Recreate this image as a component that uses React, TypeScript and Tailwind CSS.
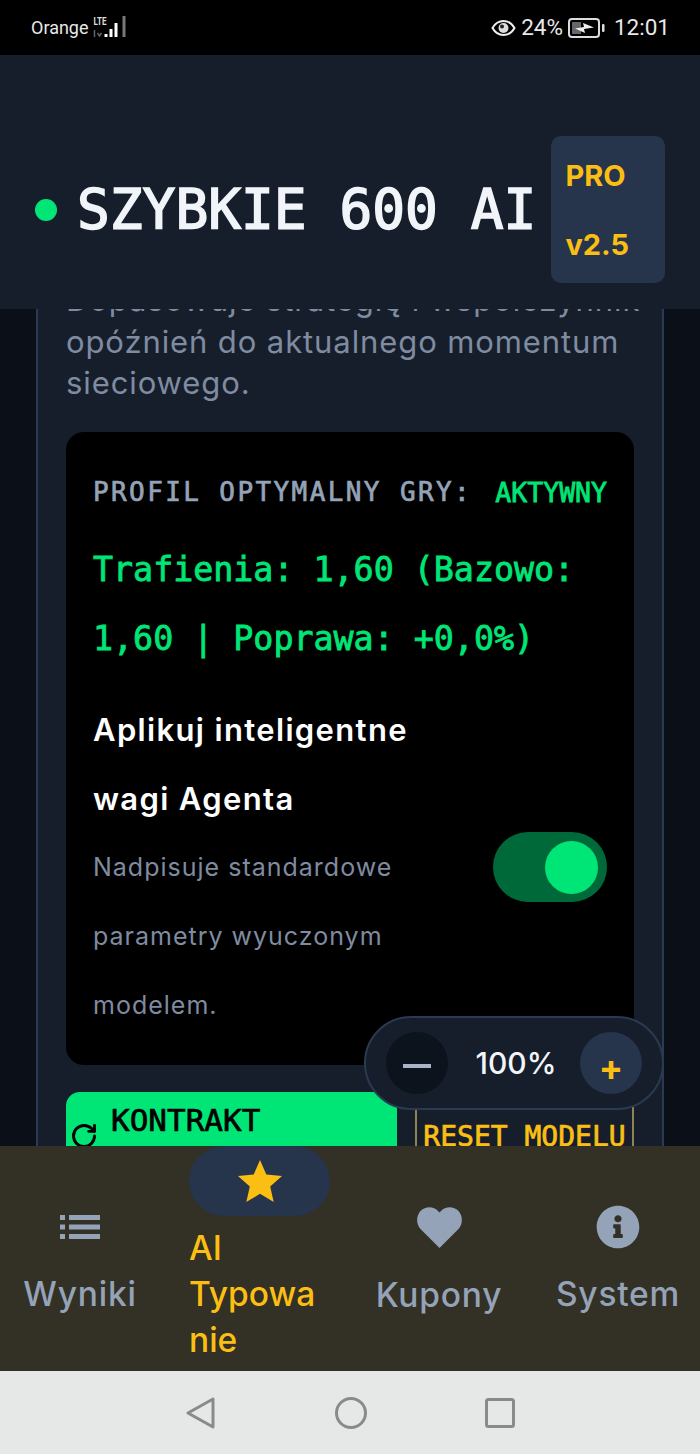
import { FaInfoCircle } from "react-icons/fa"
import { RotateCw } from "lucide-react"

const mono = "font-['DejaVu_Sans_Mono',monospace]"

function StatusBar() {
  return (
    <div className="flex h-[55px] shrink-0 items-center justify-between bg-black pl-[31px] pr-[30px] font-['Roboto',sans-serif] text-[#e8e8e8]">
      <div className="flex items-center gap-[2px]">
        <span className="text-[18px] leading-none">Orange</span>
        <svg width="38" height="24" viewBox="0 0 35 24" className="mb-[1px]">
          <text x="1" y="10" fontSize="11" fontWeight="700" fill="#ddd" fontFamily="Roboto" textLength="13" lengthAdjust="spacingAndGlyphs">LTE</text>
          <path d="M2 15V22M5 18L7 21L9 18" fill="none" stroke="#666" strokeWidth="1.500" />
          <rect x="12" y="19" width="3" height="3" fill="#fff" />
          <rect x="17" y="14" width="3" height="8" fill="#fff" />
          <rect x="22" y="8" width="3" height="14" fill="#fff" />
          <rect x="30" y="1" width="3" height="21" fill="#777" />
        </svg>
      </div>
      <div className="flex items-center">
        <svg width="25" height="18" viewBox="0 0 25 18" className="mr-[5px]">
          <path d="M1.500 9C4 4.500 8 2 12.500 2S21 4.500 23.500 9C21 13.500 17 16 12.500 16S4 13.500 1.500 9Z" fill="none" stroke="#eee" strokeWidth="2" />
          <circle cx="12.500" cy="9" r="5" fill="#ddd" />
          <circle cx="11" cy="7.500" r="2" fill="#222" />
        </svg>
        <span className="text-[22.500px] leading-none">24%</span>
        <svg width="38" height="20" viewBox="0 0 38 20" className="ml-[5px] mr-[8px]">
          <rect x="1" y="1" width="30" height="18" rx="3" fill="none" stroke="#ddd" strokeWidth="2" />
          <rect x="4" y="4" width="9" height="12" fill="#666" />
          <path d="M7 10.500L16 9L15 5L26 9.500L16 11L17 15Z" fill="#eee" />
          <rect x="34" y="6" width="2.500" height="8" rx="1" fill="#ddd" />
        </svg>
        <span className="text-[22.500px] leading-none">12:01</span>
      </div>
    </div>
  )
}

function Header() {
  return (
    <div className="flex h-[254px] shrink-0 items-center bg-[#161e2b] px-[35px] pt-[55px] text-[#f1f5f9]">
      <span className="h-[22px] w-[22px] shrink-0 rounded-full bg-[#00e676]" />
      <h1 className={`ml-[20px] whitespace-nowrap text-[54.500px] font-normal leading-[69px] [-webkit-text-stroke:1.600px_#f1f5f9] ${mono}`}>
        SZYBKIE 600 AI
      </h1>
      <div className="ml-[15px] flex h-[147px] w-[114px] shrink-0 flex-col justify-center rounded-[10px] bg-[#26344c] pl-[14px] font-['Inter',sans-serif] text-[29px] font-bold leading-[69px] text-[#fbbf14]">
        <span>PRO</span>
        <span>v2.5</span>
      </div>
    </div>
  )
}

function ControlPanel() {
  return (
    <div className="mt-[28px] rounded-[18px] bg-black px-[27px] pb-[26px] pt-[26px] font-['Inter',sans-serif] leading-[69px]">
      <div className={`flex items-center justify-between ${mono}`}>
        <span className="text-[26px] tracking-[2.400px] text-[#94a3b8] [-webkit-text-stroke:0.700px_#94a3b8]">PROFIL OPTYMALNY GRY:</span>
        <span className="text-[26.500px] text-[#00e676] [-webkit-text-stroke:0.800px_#00e676]">AKTYWNY</span>
      </div>
      <p className={`mt-[8px] text-[33.300px] text-[#00e676] [-webkit-text-stroke:0.800px_#00e676] ${mono}`}>
        Trafienia: 1,60 (Bazowo:
        <br />
        1,60 | Poprawa: +0,0%)
      </p>
      <div className="mt-[22px] flex items-center justify-between">
        <div className="mb-[-1px] w-[340px]">
          <div className="text-[31px] font-semibold tracking-[1.350px] text-white">Aplikuj inteligentne wagi Agenta</div>
          <div className="text-[25px] tracking-[1px] text-[#7f8ba0]">Nadpisuje standardowe parametry wyuczonym modelem.</div>
        </div>
        <div className="mt-[1px] flex h-[70px] w-[114px] items-center justify-end rounded-full bg-[#00693a] pr-[9px]">
          <span className="h-[53px] w-[53px] rounded-full bg-[#00e676]" />
        </div>
      </div>
    </div>
  )
}

function Actions() {
  return (
    <div className={`mt-[27px] flex gap-[18px] ${mono}`}>
      <div className="flex h-[86px] w-[331px] items-center gap-[13px] rounded-t-[14px] bg-[#00e676] pl-[4px] text-black">
        <RotateCw size={28} strokeWidth={2.500} className="mt-[2px]" />
        <span className="mb-[30px] text-[31px] leading-[36px] [-webkit-text-stroke:0.700px_#000]">KONTRAKT</span>
      </div>
      <div className="h-[86px] w-[219px] rounded-t-[14px] border-2 border-[#8f8350] pt-[8px] text-center text-[28px] leading-[69px] text-[#fbbf14] [-webkit-text-stroke:0.700px_#fbbf14]">
        RESET MODELU
      </div>
    </div>
  )
}

function ZoomPill() {
  return (
    <div className="absolute left-[364px] top-[707px] flex h-[94px] w-[300px] items-center justify-between rounded-full border-2 border-[#2a3a52] bg-[#161e2b] px-[20px] font-['Inter',sans-serif]">
      <button className="flex h-[62px] w-[62px] items-center justify-center rounded-full bg-[#0d131c]">
        <span className="mt-[6px] h-[4px] w-[28px] bg-[#a9b5c6]" />
      </button>
      <span className="ml-[4px] text-[30px] font-medium text-[#f1f5f9]">100%</span>
      <button className="flex h-[62px] w-[62px] items-center justify-center rounded-full bg-[#26344c] text-[36px] font-bold leading-none text-[#fbbf14]">
        <span className="mt-[8px]">+</span>
      </button>
    </div>
  )
}

function BottomNav() {
  const label = "text-[33.500px] font-medium tracking-[0.800px] leading-[46px]"
  return (
    <nav className="flex h-[225px] shrink-0 items-center bg-[#333026] pl-[24px] font-['Inter',sans-serif] text-[#94a3b8]">
      <div className="flex w-[112px] flex-col items-center gap-[32px] whitespace-nowrap pt-[15px]">
        <svg width="42" height="24" viewBox="0 0 42 24" fill="currentColor">
          <rect x="1" y="0" width="5" height="5" />
          <rect x="1" y="9.500" width="5" height="5" />
          <rect x="1" y="19" width="5" height="5" />
          <rect x="10" y="0" width="31" height="5" />
          <rect x="10" y="9.500" width="31" height="5" />
          <rect x="10" y="19" width="31" height="5" />
        </svg>
        <span className={label}>Wyniki</span>
      </div>
      <div className="ml-[53px] flex w-[141px] flex-col pb-[8px] text-[#fbbf14]">
        <div className="flex h-[70px] items-center justify-center rounded-[35px] bg-[#26344c]">
          <svg width="44" height="42" viewBox="0 0 44 42" fill="currentColor">
            <path d="M22 0L28.300 14.500L44 16L32.200 26.500L35.700 42L22 33.800L8.300 42L11.800 26.500L0 16L15.700 14.500Z" />
          </svg>
        </div>
        <span className="mt-[9px] text-[33.500px] font-medium leading-[46px]">AI Typowa nie</span>
      </div>
      <div className="ml-[46px] flex w-[126px] flex-col items-center gap-[24px] whitespace-nowrap pt-[7px]">
        <svg width="45" height="41" viewBox="0 0 45 41" fill="currentColor">
          <path d="M22.500 41L3.500 22C-1 17 -1 9 3.500 4C8.500 -1 16.500 -1 21 4L22.500 5.500L24 4C28.500 -1 36.500 -1 41.500 4C46 9 46 17 41.500 22Z" />
        </svg>
        <span className={label}>Kupony</span>
      </div>
      <div className="ml-[56px] flex w-[120px] flex-col items-center gap-[22px] whitespace-nowrap pt-[5px]">
        <FaInfoCircle size={44} />
        <span className={label}>System</span>
      </div>
    </nav>
  )
}

function SystemNav() {
  return (
    <div className="flex h-[83px] shrink-0 items-center justify-center gap-[118px] bg-[#e6e8e7]">
      <svg width="32" height="34" viewBox="0 0 32 34">
        <path d="M28 3V31L3 17Z" fill="none" stroke="#8a8a8a" strokeWidth="3" strokeLinejoin="round" />
      </svg>
      <svg width="32" height="32" viewBox="0 0 32 32">
        <circle cx="16" cy="16" r="14.500" fill="none" stroke="#8a8a8a" strokeWidth="3" />
      </svg>
      <svg width="30" height="30" viewBox="0 0 30 30">
        <rect x="1.500" y="1.500" width="27" height="27" rx="2" fill="none" stroke="#8a8a8a" strokeWidth="3" />
      </svg>
    </div>
  )
}

export default function App() {
  return (
    <div className="flex h-[1454px] w-[700px] flex-col overflow-hidden bg-[#0b0f17]">
      <StatusBar />
      <Header />
      <main className="relative min-h-0 flex-1 overflow-hidden">
        <div className="mx-[36px] -mt-[30px] h-[900px] rounded-[14px] border-x-2 border-[#2a3a52] bg-[#161e2b] px-[28px]">
          <p className="whitespace-nowrap font-['Inter',sans-serif] text-[31px] leading-[41.500px] tracking-[0.900px] text-[#7f8ba0]">
            Dopasowuje strategię i współczynnik
            <br />
            opóźnień do aktualnego momentum
            <br />
            sieciowego.
          </p>
          <ControlPanel />
          <Actions />
        </div>
        <ZoomPill />
      </main>
      <BottomNav />
      <SystemNav />
    </div>
  )
}
